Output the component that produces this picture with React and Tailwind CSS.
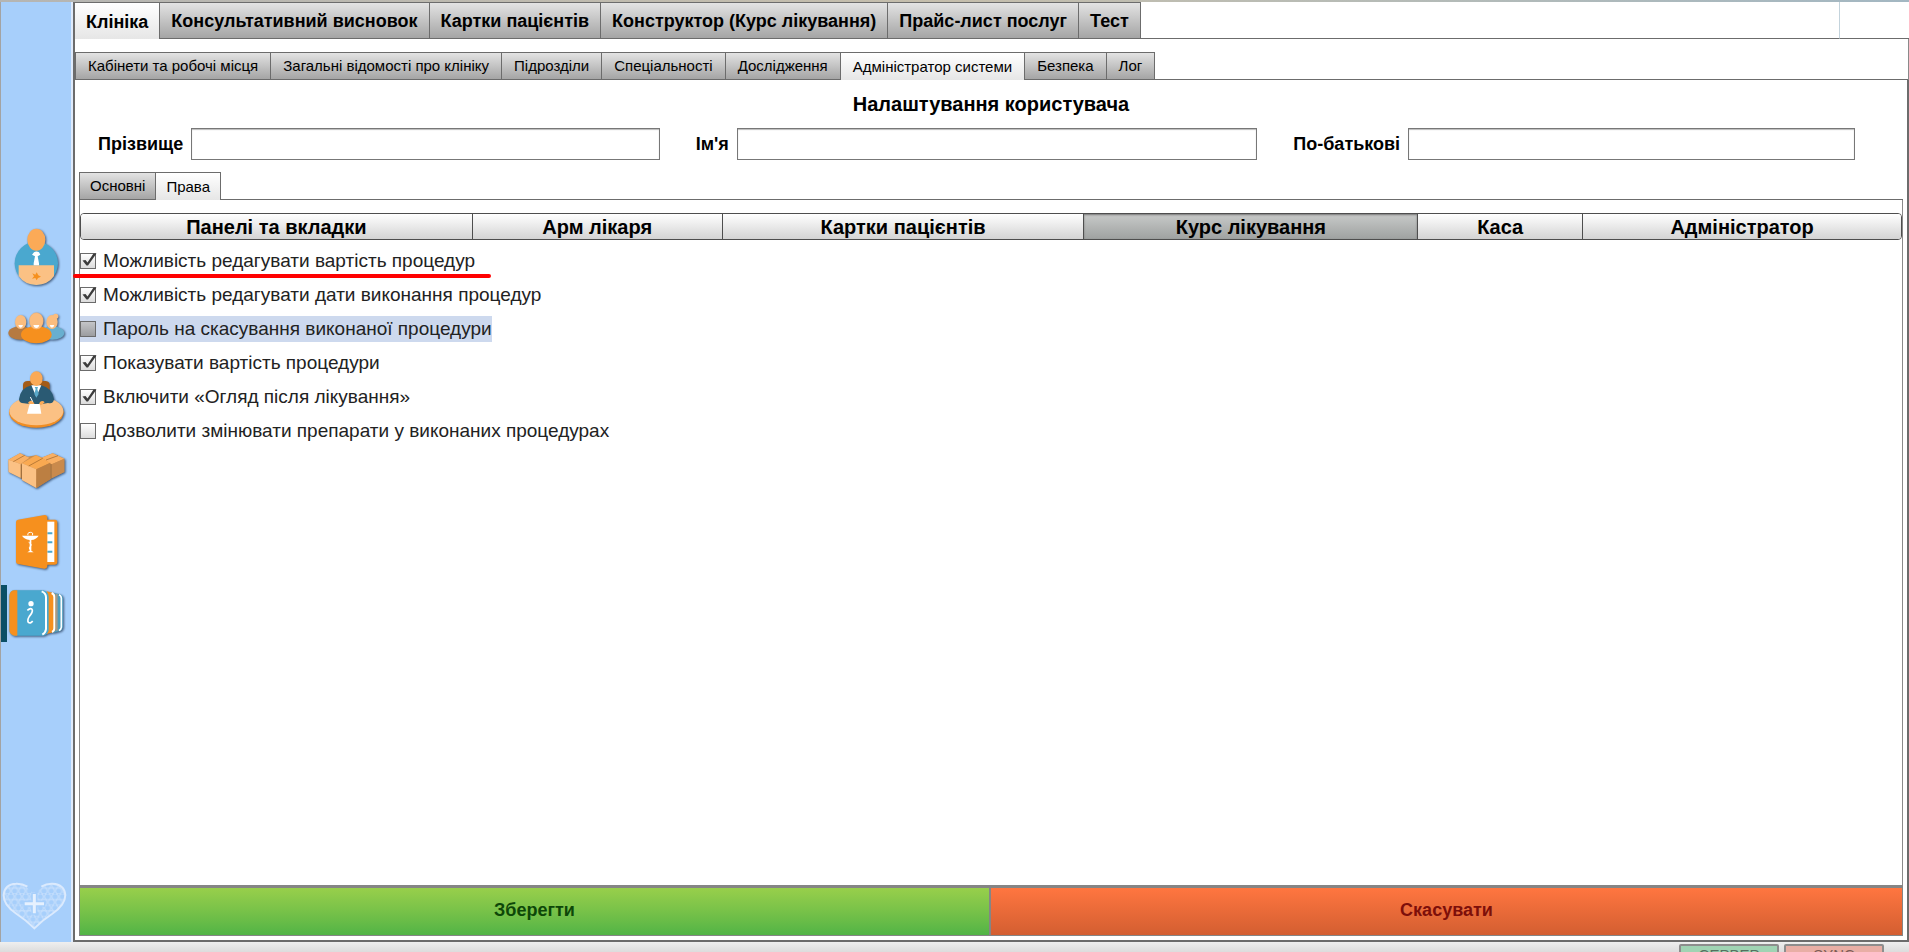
// App.jsx — clinic admin, user rights screen ("Курс лікування" section).

import { useState } from 'react';
import clsx from 'clsx';

const MAIN_TABS = [
  'Клініка',
  'Консультативний висновок',
  'Картки пацієнтів',
  'Конструктор (Курс лікування)',
  'Прайс-лист послуг',
  'Тест',
];

const CLINIC_TABS = [
  'Кабінети та робочі місця',
  'Загальні відомості про клініку',
  'Підрозділи',
  'Спеціальності',
  'Дослідження',
  'Адміністратор системи',
  'Безпека',
  'Лог',
];

const USER_TABS = ['Основні', 'Права'];

const SECTIONS = ['Панелі та вкладки', 'Арм лікаря', 'Картки пацієнтів', 'Курс лікування', 'Каса', 'Адміністратор'];

const RIGHTS = [
  { id: 'price', label: 'Можливість редагувати вартість процедур', checked: true, marked: true },
  { id: 'dates', label: 'Можливість редагувати дати виконання процедур', checked: true },
  { id: 'password', label: 'Пароль на скасування виконаної процедури', checked: false, focused: true },
  { id: 'show', label: 'Показувати вартість процедури', checked: true },
  { id: 'review', label: 'Включити «Огляд після лікування»', checked: true },
  { id: 'drugs', label: 'Дозволити змінювати препарати у виконаних процедурах', checked: false },
];

export default function App() {
  const [mainTab, setMainTab] = useState(MAIN_TABS[0]);
  const [clinicTab, setClinicTab] = useState('Адміністратор системи');
  const [userTab, setUserTab] = useState('Права');
  const [section, setSection] = useState('Курс лікування');

  return (
    <div className="flex h-screen flex-col overflow-hidden bg-white font-['Liberation_Sans',sans-serif] text-black">
      <div className="h-[2px] shrink-0 bg-linear-to-r from-[#b5b5b2] via-[#c5beac] to-[#a3b7c2]" />

      <div className="flex min-h-0 flex-1">
        <Sidebar />

        <main className="flex min-w-0 flex-1 flex-col border-b-2 border-l-2 border-[#6c6c6c]">
          <header className="flex">
            <div className="flex-1">
              <TabBar tabs={MAIN_TABS} value={mainTab} onChange={setMainTab} size="large" />
            </div>
            <div className="w-[70px] border-b border-l border-b-[#6c6c6c] border-l-[#c3d3dc]" />
          </header>

          <div className="border-r border-[#8a8a8a] pt-[13px]">
            <TabBar tabs={CLINIC_TABS} value={clinicTab} onChange={setClinicTab} />
          </div>

          <div className="flex min-h-0 flex-1 flex-col border-r-2 border-[#6c6c6c] pb-1">
            <h1 className="pt-[12px] text-center text-[20px] leading-6 font-bold">Налаштування користувача</h1>

            <form className="mt-[12px] grid grid-cols-3 gap-9 pr-[52px] pl-[23px]">
              <NameField id="surname" label="Прізвище" />
              <NameField id="name" label="Ім'я" />
              <NameField id="patronymic" label="По-батькові" />
            </form>

            <div className="mt-[12px] flex min-h-0 flex-1 flex-col pr-1 pl-1">
              <TabBar tabs={USER_TABS} value={userTab} onChange={setUserTab} size="small" />

              <div className="flex-1 border-x border-[#8a8a8a] pt-[13px]">
                <nav className="grid h-[27px] grid-cols-[392fr_250fr_362fr_334fr_165fr_318fr] overflow-hidden rounded-[4px] border border-[#4e4e4e]">
                  {SECTIONS.map((s) => (
                    <button
                      key={s}
                      type="button"
                      onClick={() => setSection(s)}
                      className={clsx(
                        'border-[#4e4e4e] text-[20px] leading-6 font-bold not-last:border-r',
                        s === section
                          ? 'bg-linear-to-b from-[#c8cac9] to-[#9fa2a1] shadow-[inset_0_1px_2px_#777]'
                          : 'bg-linear-to-b from-white to-[#d4d4d4]',
                      )}
                    >
                      {s}
                    </button>
                  ))}
                </nav>

                <div className="mt-[8px] flex flex-col items-start gap-2">
                  {RIGHTS.map((r) => <RightRow key={r.id} right={r} />)}
                </div>
              </div>

              <div className="grid h-[51px] grid-cols-2 border border-t-[3px] border-[#858585] text-[18px] font-bold">
                <button
                  type="button"
                  className="border-r-2 border-[#858585] bg-linear-to-b from-[#98cf4b] to-[#51b446] pb-[2px] text-[#0d4708]"
                >
                  Зберегти
                </button>
                <button type="button" className="bg-linear-to-b from-[#ff7640] to-[#d35e31] pb-[2px] text-[#7d0f0a]">
                  Скасувати
                </button>
              </div>
            </div>
          </div>
        </main>
      </div>

      {/* Status bar, the two indicators run below the window edge */}
      <footer className="flex h-[10px] shrink-0 items-start justify-end gap-[5px] bg-linear-to-b from-[#efefef] to-[#dcdcdc] pt-[2px] pr-[25px]">
        <StatusButton className="bg-[#a0d3b3] text-[#56705f]">СЕРВЕР</StatusButton>
        <StatusButton className="bg-[#e8aea5] text-[#7d5b56]">SYNC</StatusButton>
      </footer>
    </div>
  );
}

// --- subcomponents ---

const TAB_SIZES = {
  small:  'h-[28px] px-[10px] text-[15px] first:border-l',
  medium: 'h-[28px] px-3 text-[15px] first:border-l',
  large:  'h-[37px] px-[11px] text-[18px] font-bold',
};

function TabBar({ tabs, value, onChange, size = 'medium' }) {
  return (
    <div role="tablist" className="flex">
      {tabs.map((t) => {
        const active = t === value;
        return (
          <button
            key={t}
            type="button"
            role="tab"
            aria-selected={active}
            onClick={() => onChange(t)}
            className={clsx(
              'border-t border-r border-[#6c6c6c] whitespace-nowrap',
              TAB_SIZES[size],
              active
                ? 'bg-linear-to-b from-white to-[#e6e6e6] pt-[2px]'
                : 'border-b bg-linear-to-b from-[#e3e3e3] to-[#a5a5a5] pt-px',
            )}
          >
            {t}
          </button>
        );
      })}
      <div className="flex-1 border-b border-[#6c6c6c]" />
    </div>
  );
}

function NameField({ id, label }) {
  return (
    <div className="flex items-center gap-2">
      <label htmlFor={id} className="text-[18px] leading-6 font-bold">{label}</label>
      <input
        id={id}
        type="text"
        className="h-[32px] min-w-0 flex-1 border border-[#777] bg-white px-2 shadow-[inset_0_1px_1px_#bbb] outline-none"
      />
    </div>
  );
}

function RightRow({ right }) {
  const [checked, setChecked] = useState(right.checked);
  return (
    <div className={clsx('relative flex h-[26px] items-center gap-[7px]', right.focused && 'bg-[#cdd9ee]')}>
      <span className="relative flex">
        <input
          id={right.id}
          type="checkbox"
          checked={checked}
          onChange={(e) => setChecked(e.target.checked)}
          className={clsx(
            'size-4 appearance-none border border-[#6b6b6b] bg-linear-to-b',
            right.focused ? 'from-[#c4c5c8] to-[#9c9da0]' : 'from-white to-[#dcdcdc]',
          )}
        />
        {checked && (
          <svg viewBox="0 0 16 16" className="pointer-events-none absolute inset-0 size-4 overflow-visible">
            <path d="M2.5 7.5 L5.5 7 L7.5 9.5 L13.5 0.5 L16.5 0.5 L8 12.5 L6.5 12.5 Z" fill="#3c3c3c" />
          </svg>
        )}
      </span>
      <label htmlFor={right.id} className="text-[19px] leading-6 whitespace-nowrap text-[#222]">{right.label}</label>
      {right.marked && <div className="absolute -right-[16px] -bottom-[4px] -left-[7px] h-[4px] rounded-full bg-[#ff0000]" />}
    </div>
  );
}

function StatusButton({ className, children }) {
  return (
    <button
      type="button"
      className={clsx('h-[22px] w-[100px] rounded-[2px] border-2 border-[#8d8d8d] text-[15px] leading-4', className)}
    >
      {children}
    </button>
  );
}

const SIDEBAR_ITEMS = [
  { name: 'Реєстратура', icon: DoctorIcon },
  { name: 'Пацієнти', icon: PeopleIcon },
  { name: 'Керівник', icon: ManagerIcon },
  { name: 'Склад', icon: BoxesIcon },
  { name: 'Аптека', icon: PharmacyIcon },
  { name: 'Довідники', icon: BooksIcon, active: true },
];

function Sidebar() {
  return (
    <aside className="flex w-[73px] shrink-0 flex-col border-r-2 border-l border-r-[#dfeafa] border-l-[#a3a3a3] bg-[#a7cffb]">
      <nav className="flex flex-1 flex-col pt-[220px]">
        {SIDEBAR_ITEMS.map(({ name, icon: Icon, active }) => (
          <a key={name} href="#" aria-label={name} className="relative block h-[71px]">
            {active && <span className="absolute top-[8px] left-0 h-[57px] w-[6px] bg-[#0b4f66]" />}
            <Icon />
          </a>
        ))}
      </nav>
      <HeartLogo />
    </aside>
  );
}

function RailSvg({ viewBox, children }) {
  return (
    <svg viewBox={viewBox} className="relative h-[71px] w-full drop-shadow-[1px_1px_1px_rgba(20,40,70,0.7)]">
      {children}
    </svg>
  );
}

function DoctorIcon() {
  return (
    <RailSvg viewBox="3 6 210 213">
      <circle cx="109" cy="130" r="65" fill="#4aa8cf" />
      <path d="M56 136 H162 V168 Q144 194 109 195 Q74 194 56 168 Z" fill="#fbc184" />
      <path d="M83 66 Q109 80 135 66 L131 88 Q109 102 87 88 Z" fill="#4aa8cf" />
      <ellipse cx="109" cy="59" rx="27" ry="33" fill="#fbaa57" />
      <path d="M102 97 Q109 92 117 97 L121 104 L113 109 L117 130 V136 H101 V130 L105 109 L96 104 Z" fill="#fff" />
      <path d="M97 160 L106 164 L110 157 L115 166 L123 170 L114 174 L110 181 L106 174 L96 176 L102 169 Z" fill="#f6901e" />
    </RailSvg>
  );
}

function PeopleIcon() {
  return (
    <RailSvg viewBox="3 219 210 213">
      <ellipse cx="61" cy="339" rx="36" ry="20" fill="#b67a41" />
      <ellipse cx="157" cy="339" rx="36" ry="20" fill="#68afcf" />
      <ellipse cx="62" cy="306" rx="17" ry="21" fill="#fbbd7e" />
      <ellipse cx="156" cy="306" rx="17" ry="21" fill="#fbbd7e" />
      <circle cx="167" cy="289" r="8" fill="#fbbd7e" />
      <ellipse cx="109" cy="344" rx="46" ry="26" fill="#f6901e" />
      <ellipse cx="109" cy="303" rx="21" ry="25" fill="#fbbd7e" stroke="#f3a55d" strokeWidth="1" />
      <path d="M55 315 H69 Q67 323 62 323 Q57 323 55 315 Z M149 315 H163 Q161 323 156 323 Q151 323 149 315 Z M100 315 H118 Q116 324 109 324 Q102 324 100 315 Z" fill="#fff" />
    </RailSvg>
  );
}

function ManagerIcon() {
  return (
    <RailSvg viewBox="3 432 210 213">
      <path d="M69 516 V494 Q70 483 83 483 H137 Q149 484 149 496 V516 Z" fill="#a35b17" />
      <ellipse cx="109" cy="577" rx="82" ry="46" fill="#f08d23" />
      <ellipse cx="109" cy="573" rx="81" ry="43" fill="#fbc184" />
      <path d="M57 538 Q62 502 95 496 H124 Q157 504 162 538 Q160 553 144 549 L122 553 H94 L72 550 Q57 550 57 538 Z" fill="#2a5a73" />
      <path d="M94 496 H124 L109 530 Z" fill="#fff" />
      <path d="M104 501 H114 L112 507 L116 522 L109 533 L103 522 L107 507 Z" fill="#5aa9c9" />
      <ellipse cx="109" cy="476" rx="19" ry="22" fill="#fbaa57" />
      <path d="M84 548 Q92 538 100 546 L105 554 H89 Z M120 546 Q128 539 134 547 L126 554 H116 Z" fill="#fbaa57" />
      <path d="M89 552 H119 L124 581 H81 Z" fill="#fff" />
      <path d="M91 531 L98 545" stroke="#fff" strokeWidth="3" />
    </RailSvg>
  );
}

function BoxesIcon() {
  return (
    <RailSvg viewBox="3 -15 210 213">
      <path d="M25 59 L60 40 L82 50 L108 46 L125 53 L158 40 L193 56 V96 L155 115 L109 144 L66 120 V114 L26 96 Z" fill="#c98d4e" />
      <path d="M25 59 L60 40 L88 53 L62 72 Z" fill="#f9b064" />
      <path d="M25 59 L62 72 V114 L26 96 Z" fill="#fbc184" />
      <path d="M125 53 L158 40 L193 56 L155 73 Z" fill="#f9b064" />
      <path d="M155 73 L193 56 V96 L155 115 Z" fill="#c98a4c" />
      <path d="M66 70 L108 46 L125 53 L151 68 L109 88 Z" fill="#f9a951" />
      <path d="M66 70 L109 88 V144 L66 120 Z" fill="#fbc184" />
      <path d="M109 88 L151 68 V118 L109 144 Z" fill="#bc7f42" />
      <path d="M40 65 L74 46 M86 78 L128 55 M138 60 L174 47" stroke="#9a6229" strokeWidth="2" fill="none" />
      <path d="M64 73 V117 M153 72 V115" stroke="#9a6c3c" strokeWidth="3" />
    </RailSvg>
  );
}

function PharmacyIcon() {
  return (
    <RailSvg viewBox="3 198 210 213">
      <path d="M138 239 H166 Q172 240 172 246 V366 Q172 374 164 374 H138 Z" fill="#f6901e" />
      <path d="M140 245 H163 V366 H140 Z" fill="#fff" />
      <path d="M142 280 H157 M142 307 H157 M142 335 H157" stroke="#4aa8cf" strokeWidth="6" />
      <path d="M48 246 Q48 240 54 239 L134 225 Q142 225 142 233 V379 Q141 387 133 386 L54 372 Q48 371 48 365 Z" fill="#f6901e" />
      <path d="M66 287 H116 Q108 299 94 300 V332 L101 337 H82 L89 332 V300 Q72 297 66 287 Z" fill="#fff" />
      <path d="M84 286 Q81 278 91 277 Q101 277 97 286 M86 307 Q98 313 91 319 Q84 323 91 330" stroke="#fff" strokeWidth="3" fill="none" />
    </RailSvg>
  );
}

function BooksIcon() {
  return (
    <RailSvg viewBox="3 411 210 213">
      <path d="M160 459 L181 463 Q189 466 189 474 V561 Q188 570 180 573 L160 579 Z" fill="#4a9cbd" />
      <path d="M177 464 Q184 467 184 475 V562 Q183 568 177 572" stroke="#fff" strokeWidth="5" fill="none" />
      <path d="M140 454 L158 458 Q167 461 167 471 V566 Q167 574 159 577 L140 582 Z" fill="#f6901e" />
      <path d="M155 459 Q163 463 163 471 V565 Q163 573 156 576" stroke="#fff" strokeWidth="6" fill="none" />
      <path d="M167 462 H173 V572 H167 Z" fill="#a19a8d" />
      <path d="M42 451 H128 Q145 453 146 470 V570 Q144 586 128 587 H42 Q28 584 28 568 V468 Q29 453 42 451 Z" fill="#4aa8cf" />
      <path d="M52 451 V587 H42 Q28 584 28 568 V468 Q29 453 42 451 Z" fill="#f6901e" />
      <path d="M125 454 Q138 459 138 472 V567 Q137 578 127 584" stroke="#fff" strokeWidth="6" fill="none" />
      <circle cx="93" cy="491" r="8" fill="#fff" />
      <path d="M82 511 Q94 501 97 510 Q98 518 88 529 Q81 540 85 547 Q91 552 98 543" stroke="#fff" strokeWidth="5" fill="none" />
    </RailSvg>
  );
}

function HeartLogo() {
  return (
    <svg viewBox="3 60 210 156" className="mb-[10px] h-[52px] w-full">
      <defs>
        <pattern id="cells" width="22" height="34" patternUnits="userSpaceOnUse">
          <g fill="none" stroke="#c6dffc" strokeWidth="3">
            <circle cx="11" cy="8" r="9" />
            <circle cx="0" cy="25" r="9" />
            <circle cx="22" cy="25" r="9" />
          </g>
        </pattern>
      </defs>
      <path
        d="M103 202 Q78 180 50 162 Q10 135 11 105 Q14 72 48 71 Q70 70 86 88 Q103 106 120 88 Q138 70 158 71 Q193 73 196 105 Q196 135 156 162 Q128 180 103 202 Z"
        fill="url(#cells)"
      />
      <path
        d="M82 80 Q66 70 48 71 Q14 72 11 105 Q10 135 50 162 Q78 180 103 205 Q128 180 156 162 Q196 135 196 105 Q193 73 158 71 Q140 70 124 80"
        fill="none"
        stroke="#dbeafd"
        strokeWidth="6"
      />
      <path d="M103 98 V164 M70 131 H136" stroke="#a7cffb" strokeWidth="18" />
      <path d="M103 102 V160 M74 131 H132" stroke="#e6f1fe" strokeWidth="9" />
    </svg>
  );
}
